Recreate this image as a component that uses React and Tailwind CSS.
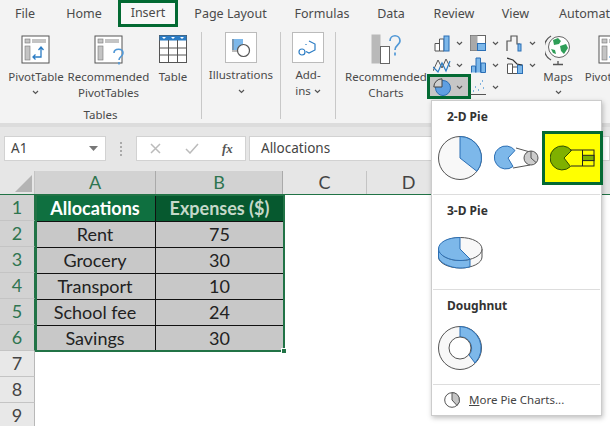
import React from 'react';

const UI = 'font-["Noto_Sans","Open_Sans",sans-serif]';
const BLUE = '#7db8ea';
const BLUE_D = '#2b6fb5';

const tabs = [
  { label: 'File', w: 'w-[50px] justify-center' },
  { label: 'Home', w: 'w-[68px] justify-center' },
  { label: 'Insert', w: 'w-[60px] justify-center', active: true },
  { label: 'Page Layout', w: 'w-[105px] justify-center' },
  { label: 'Formulas', w: 'w-[78px] justify-center' },
  { label: 'Data', w: 'w-[60px] justify-center' },
  { label: 'Review', w: 'w-[66px] justify-center' },
  { label: 'View', w: 'w-[57px] justify-center' },
  { label: 'Automate', w: 'w-[66px] pl-[15px]' },
];

const Chev = ({ className = '' }) => (
  <svg width="7" height="5" viewBox="0 0 7 5" className={className}>
    <path d="M1 1l2.500 2.500L6 1" fill="none" stroke="#555" strokeWidth="1.200" />
  </svg>
);

const PivotIcon = ({ question }) => (
  <svg width="30" height="30" viewBox="0 0 30 30">
    <rect x="1" y="1" width="27" height="27" fill="#fff" stroke="#555" />
    <rect x="4" y="4" width="5" height="4" fill="#c4c4c4" stroke="#777" strokeWidth=".6" />
    <rect x="11" y="4" width="14" height="4" fill="#c4c4c4" />
    <rect x="4" y="11" width="5" height="14" fill="#c4c4c4" stroke="#777" strokeWidth=".6" />
    {question ? (
      <path d="M20 18c0-5 9-5 9 0 0 3.500-4 3.500-4 7M25 27v2.500" fill="none" stroke="#4f97d6" strokeWidth="1.600" />
    ) : (
      <path d="M12 22h8v-9M17.500 15l2.500-3 2.500 3M14.500 19.500L12 22l2.500 2.500" fill="none" stroke="#2b7cc4" strokeWidth="1.300" />
    )}
  </svg>
);

const TableIcon = () => (
  <svg width="29" height="29" viewBox="0 0 29 29">
    <rect x=".5" y=".5" width="27" height="27" fill="#fff" stroke="#555" />
    <rect x=".5" y=".5" width="27" height="5" fill="#2b7cc4" />
    <path d="M3 2h4l-2 2zM12 2h4l-2 2zM21 2h4l-2 2z" fill="#fff" />
    <path d="M.5 13h27M.5 20h27M9.500 5v22M18.500 5v22" stroke="#555" fill="none" />
  </svg>
);

const BoxIcon = ({ children }) => (
  <div className="w-[32px] h-[31px] bg-white border border-[#bbb] flex items-center justify-center">
    <svg width="20" height="20" viewBox="0 0 20 20">{children}</svg>
  </div>
);

const RecCharts = () => (
  <svg width="31" height="31" viewBox="0 0 31 31">
    <rect x=".5" y=".5" width="9" height="29" fill="#b9b9b9" />
    <rect x="9.500" y="12.500" width="9" height="17" fill="#fff" stroke="#666" />
    <path d="M19 7c0-7 10-7 10 0 0 4-5 4-5 9M24 18.500v3" fill="none" stroke="#4f97d6" strokeWidth="1.700" />
  </svg>
);

const ColumnChart = () => (
  <svg width="17" height="17" viewBox="0 0 17 17">
    <path d="M1 8.500h4.500V16H1zM5.500 4h4.500v12H5.500z" fill="#fff" stroke="#555" />
    <rect x="10" y="1" width="5" height="15" fill={BLUE} stroke={BLUE_D} />
  </svg>
);
const HierarchyChart = () => (
  <svg width="16" height="16" viewBox="0 0 16 16">
    <rect x=".5" y=".5" width="15" height="15" fill="#fff" stroke="#666" />
    <rect x=".5" y=".5" width="7" height="15" fill="#a9a9a9" />
    <rect x="7.500" y="8.500" width="8" height="7" fill={BLUE} stroke={BLUE_D} />
  </svg>
);
const WaterfallChart = () => (
  <svg width="17" height="17" viewBox="0 0 17 17">
    <path d="M1 16V6h4V1h6v8h3" fill="none" stroke="#555" strokeWidth="1.200" />
    <rect x="12" y="9" width="3" height="7" fill={BLUE} stroke={BLUE_D} />
  </svg>
);
const LineChart = () => (
  <svg width="18" height="16" viewBox="0 0 18 16">
    <path d="M0 14L5 3l4 8 4-9 4 8" fill="none" stroke="#555" />
    <path d="M0 10l5 5 4-9 4 8 4-10" fill="none" stroke="#2b7cc4" strokeWidth="1.200" />
  </svg>
);
const BarsChart = () => (
  <svg width="15" height="16" viewBox="0 0 15 16">
    <path d="M.5 15.500V9h4v6.500M5 15.500V1h4.500v14.500M10 15.500V6h4.500v9.500z" fill={BLUE} stroke={BLUE_D} />
  </svg>
);
const ComboChart = () => (
  <svg width="16" height="17" viewBox="0 0 16 17">
    <path d="M.5 7h5v9.500h-5zM5.500 10h5v6.500h-5z" fill="#fff" stroke="#555" />
    <rect x="10.500" y="8" width="5" height="8.500" fill={BLUE} stroke={BLUE_D} />
    <path d="M0 1l6 2 4 4 5 1" fill="none" stroke="#333" strokeWidth="1.200" />
  </svg>
);
const ScatterChart = () => (
  <svg width="16" height="16" viewBox="0 0 16 16">
    <path d="M.5 15.500H16" fill="none" stroke="#555" />
    <path d="M3 12h1M5 8h1M8 11h1M10 5h1M13 9h1M12 2h1" stroke="#5b9fd8" strokeWidth="1.400" strokeDasharray="1 1" />
  </svg>
);
// gray quarter sits on top of the blue disc
const PieButton = () => (
  <svg width="18" height="18" viewBox="0 0 18 18">
    <circle cx="10" cy="10" r="7.500" fill="#5f9fe2" stroke={BLUE_D} />
    <path d="M9 9H.8A8.200 8.200 0 0 1 9 .8z" fill="#cfcfcf" stroke="#444" />
  </svg>
);

const Globe = () => (
  <svg width="26" height="33" viewBox="0 0 26 33">
    <path d="M6 3a14 14 0 0 0 0 24M13 28v3M8 31.500h10" fill="none" stroke="#555" strokeWidth="1.300" />
    <circle cx="14" cy="14" r="10.500" fill="#fff" stroke="#666" />
    <path d="M8 7l5-2 3 3-2 3-5 1zM15 13l6-2 2 4-4 6-3-3zM6 16l4 1 1 4-3-1z" fill="#2f9e58" />
  </svg>
);

const ChartCell = ({ active, children }) => (
  <div className="relative h-[22px] flex items-center gap-[5px] pl-[1px]">
    {active && <div className="absolute left-[-5px] top-[-2px] w-[44px] h-[25px] bg-[#c6c6c6] border-[3px] border-[#036a33]" />}
    <div className="relative w-[18px] flex justify-center">{children}</div>
    <Chev className="relative" />
  </div>
);

const Separator = () => <div className="w-px h-[87px] mt-[5px] bg-[#c8c8c8] shrink-0" />;

const RibbonItem = ({ w, icon, children }) => (
  <div className={`${w} shrink-0 flex flex-col items-center text-center leading-[16px]`}>
    <div className="h-[33px] mt-[6px] flex items-center justify-center">{icon}</div>
    <div className="mt-[3px]">{children}</div>
  </div>
);

const Ribbon = () => (
  <div className="h-[96px] bg-[#f3f3f3] flex text-[11.500px] text-[#4a4a4a] overflow-hidden">
    <div className="w-[201px] shrink-0 flex flex-col">
      <div className="flex h-[81px]">
        <RibbonItem w="w-[72px]" icon={<PivotIcon />}>
          PivotTable
          <div className="flex justify-center mt-[5px]"><Chev /></div>
        </RibbonItem>
        <RibbonItem w="w-[73px]" icon={<PivotIcon question />}>
          Recommended<br />PivotTables
        </RibbonItem>
        <RibbonItem w="w-[56px]" icon={<TableIcon />}>Table</RibbonItem>
      </div>
      <div className="text-center leading-[16px]">Tables</div>
    </div>
    <Separator />
    <div className="w-[78px] shrink-0 flex flex-col items-center leading-[16px]">
      <div className="mt-[5px]">
        <BoxIcon>
          <rect x="1" y="1" width="11" height="11" fill={BLUE} />
          <path d="M1 1h2v11h9v2H1z" fill="#777" opacity=".5" />
          <circle cx="12.500" cy="12.500" r="6" fill="#fff" stroke="#555" strokeWidth="1.200" />
        </BoxIcon>
      </div>
      <div className="mt-[4px]">Illustrations</div>
      <Chev className="mt-[6px]" />
    </div>
    <Separator />
    <div className="w-[54px] shrink-0 flex flex-col items-center leading-[16px]">
      <div className="mt-[5px]">
        <BoxIcon>
          <path d="M11 3l6 3v6l-6 3-3-1.500M8 7V6" fill="none" stroke="#2b7cc4" strokeWidth="1.200" />
          <circle cx="4" cy="14" r="3" fill="none" stroke="#2b7cc4" strokeWidth="1.200" />
        </BoxIcon>
      </div>
      <div className="mt-[4px] text-center">Add-<br /><span className="inline-flex items-center gap-[3px]">ins<Chev /></span></div>
    </div>
    <Separator />
    <RibbonItem w="w-[96px] pl-[4px]" icon={<RecCharts />}>
      Recommended<br />Charts
    </RibbonItem>
    <div className="w-[109px] shrink-0 mt-[5px] grid grid-cols-3 content-start">
      <ChartCell><ColumnChart /></ChartCell>
      <ChartCell><HierarchyChart /></ChartCell>
      <ChartCell><WaterfallChart /></ChartCell>
      <ChartCell><LineChart /></ChartCell>
      <ChartCell><BarsChart /></ChartCell>
      <ChartCell><ComboChart /></ChartCell>
      <ChartCell active><PieButton /></ChartCell>
      <ChartCell><ScatterChart /></ChartCell>
    </div>
    <RibbonItem w="w-[34px]" icon={<Globe />}>
      Maps
      <div className="flex justify-center mt-[5px]"><Chev /></div>
    </RibbonItem>
    <RibbonItem w="w-[76px]" icon={<PivotIcon />}>
      PivotChart
    </RibbonItem>
  </div>
);

const FormulaBar = () => (
  <div className="h-[48px] bg-[#e6e6e6] border-t-[4px] border-[#dcdcdc] pt-[9px] pl-[4px] flex items-start text-[13.500px] text-[#444]">
    <div className="w-[102px] h-[25px] bg-white border border-[#d2d2d2] flex items-center justify-between pl-[6px] pr-[7px] shrink-0">
      A1
      <svg width="9" height="5" viewBox="0 0 9 5"><path d="M0 0h9L4.500 5z" fill="#777" /></svg>
    </div>
    <div className="w-[30px] h-[25px] flex flex-col items-center justify-center gap-[2px] shrink-0">
      <span className="w-[2px] h-[2px] bg-[#aaa]" /><span className="w-[2px] h-[2px] bg-[#aaa]" /><span className="w-[2px] h-[2px] bg-[#aaa]" /><span className="w-[2px] h-[2px] bg-[#aaa]" />
    </div>
    <div className="w-[110px] h-[25px] bg-white border border-[#d2d2d2] flex items-center pl-[13px] shrink-0">
      <svg width="11" height="11" viewBox="0 0 11 11"><path d="M1 1l9 9M10 1l-9 9" stroke="#bbb" strokeWidth="1.500" /></svg>
      <svg width="14" height="11" viewBox="0 0 14 11" className="ml-[24px]"><path d="M1 6l4 4 8-9" fill="none" stroke="#bbb" strokeWidth="1.500" /></svg>
      <span className="ml-[23px] font-['Liberation_Serif',serif] italic font-bold text-[13px] text-[#555]">fx</span>
    </div>
    <div className="ml-[3px] flex-1 h-[25px] bg-white border border-[#d2d2d2] flex items-center pl-[11px]">Allocations</div>
  </div>
);

const rows = [
  ['Rent', '75'],
  ['Grocery', '30'],
  ['Transport', '10'],
  ['School fee', '24'],
  ['Savings', '30'],
];

const RowHead = ({ n, on }) => (
  <div className={`h-[26px] flex items-center justify-center border-b border-[#c4c4c4] border-r ${on ? 'bg-[#d2d2d2] text-[#2f7550] border-r-[#217346]' : 'bg-[#e8e8e8] text-[#444] border-r-[#b8b8b8]'}`}>{n}</div>
);

const Sheet = () => (
  <div className="bg-white flex-1 overflow-hidden font-['Lato',sans-serif] text-[18px]">
    <div className="flex h-[24px] bg-[#e6e6e6] text-[#444] border-b border-[#217346]">
      <div className="w-[35px] shrink-0 relative border-r border-[#c4c4c4]">
        <div className="absolute right-[2px] bottom-[2px] w-0 h-0 border-l-[17px] border-l-transparent border-b-[17px] border-b-[#b4b4b4]" />
      </div>
      <div className="w-[121px] shrink-0 bg-[#d2d2d2] text-[#2f7550] border-r border-[#aaa] flex items-center justify-center">A</div>
      <div className="w-[127px] shrink-0 bg-[#d2d2d2] text-[#2f7550] border-r border-[#aaa] flex items-center justify-center">B</div>
      <div className="w-[84px] shrink-0 border-r border-[#c4c4c4] flex items-center justify-center">C</div>
      <div className="w-[83px] shrink-0 flex items-center justify-center">D</div>
    </div>
    <div className="flex">
      <div className="w-[35px] shrink-0">
        {[1, 2, 3, 4, 5, 6].map((n) => <RowHead key={n} n={n} on />)}
        {[7, 8, 9].map((n) => <RowHead key={n} n={n} />)}
      </div>
      <div className="relative w-[248px] h-[156px] grid grid-cols-[121px_127px] grid-rows-[repeat(6,26px)]">
        <div className="bg-[#0f7040] text-white font-bold flex items-center justify-center border-r border-[#111]">Allocations</div>
        <div className="bg-[#06592f] text-[#c5d8c9] font-bold flex items-center justify-center">Expenses ($)</div>
        {rows.map(([name, value]) => (
          <React.Fragment key={name}>
            <div className="bg-[#c8c8c8] text-[#222] flex items-center justify-center border-t border-r border-[#111]">{name}</div>
            <div className="bg-[#c8c8c8] text-[#222] flex items-center justify-center border-t border-[#111]">{value}</div>
          </React.Fragment>
        ))}
        <div className="absolute left-0 top-[-1px] w-[250px] h-[158px] border-2 border-[#217346] pointer-events-none" />
        <div className="absolute left-[246px] top-[153px] w-[6px] h-[6px] bg-[#217346] border border-white" />
      </div>
    </div>
  </div>
);

const PieIcon = () => (
  <svg width="44" height="44" viewBox="0 0 44 44">
    <circle cx="22" cy="22" r="21.500" fill="#f8f8f8" stroke="#555" />
    <path d="M22 22V.5A21.500 21.500 0 0 1 38.900 35.300z" fill={BLUE} stroke={BLUE_D} />
  </svg>
);
const PieOfPieIcon = () => (
  <svg width="45" height="26" viewBox="0 0 45 26">
    <path d="M22 3l14 4M19 23l17-3" stroke="#555" fill="none" />
    <path d="M21 5.500A11.500 11.500 0 1 0 19 21.500L14 13z" fill={BLUE} stroke={BLUE_D} />
    <circle cx="37" cy="13" r="7" fill="#ccc" stroke="#555" />
    <path d="M37 13V6M37 13l5 4.500" stroke="#555" fill="none" />
  </svg>
);
const BarOfPieIcon = () => (
  <svg width="45" height="26" viewBox="0 0 45 26">
    <path d="M21.500 5.500A12 12 0 1 0 20.500 21.500L14 13z" fill="#7fb000" stroke="#2f4f00" />
    <path d="M20 5h12M21 21h11" stroke="#222" fill="none" />
    <rect x="32.500" y="5" width="11.500" height="16" fill="none" stroke="#222" />
    <rect x="32.500" y="10.300" width="11.500" height="5.300" fill="#7fb000" stroke="#222" />
  </svg>
);
const Pie3DIcon = () => (
  <svg width="45" height="32" viewBox="0 0 45 32">
    <path d="M.5 12v8c0 6 10 11 22 11s21.500-5 21.500-11v-8z" fill="#f8f8f8" stroke="#555" />
    <path d="M.5 12v8c0 5.500 12 11 21.500 11 4 0 7-.3 10-1.300v-8z" fill={BLUE} stroke={BLUE_D} />
    <ellipse cx="22.500" cy="12" rx="21.500" ry="11.500" fill="#f8f8f8" stroke="#555" />
    <path d="M22 12V.5C10 .5.500 5 .5 12c0 6 10 11.500 21.500 11.500 4 0 7-.5 10-1.500z" fill={BLUE} stroke={BLUE_D} />
  </svg>
);
const DoughnutIcon = () => (
  <svg width="44" height="44" viewBox="0 0 44 44">
    <circle cx="22" cy="22" r="21.500" fill="#f8f8f8" stroke="#555" />
    <path d="M22 .5A21.500 21.500 0 0 1 37 37L31 29A11 11 0 0 0 22 11z" fill={BLUE} stroke={BLUE_D} />
    <circle cx="22" cy="22" r="11" fill="#fff" stroke="#555" />
  </svg>
);

const SectionTitle = ({ children }) => (
  <div className="font-bold text-[12px] text-[#333] leading-[16px] pl-[14px]">{children}</div>
);

const PieMenu = () => (
  <div className={`absolute left-[431px] top-[100px] w-[171px] h-[316px] bg-white border border-[#ccc] shadow-[1px_2px_5px_rgba(0,0,0,0.25)] flex flex-col ${UI}`}>
    <div className="h-[94px] border-b border-[#ddd] mx-[1px] pt-[8px]">
      <SectionTitle>2-D Pie</SectionTitle>
      <div className="relative flex items-center pl-[5px] mt-[11px] h-[44px]">
        <PieIcon />
        <div className="ml-[12px]"><PieOfPieIcon /></div>
        <div className="absolute left-[109px] top-[-5px] w-[61px] h-[54px] bg-[#ffff00] border-[3px] border-[#036a33] flex items-center justify-center">
          <BarOfPieIcon />
        </div>
      </div>
    </div>
    <div className="h-[95px] border-b border-[#ddd] mx-[1px] pt-[8px]">
      <SectionTitle>3-D Pie</SectionTitle>
      <div className="pl-[5px] mt-[18px]"><Pie3DIcon /></div>
    </div>
    <div className="h-[95px] border-b border-[#ddd] mx-[1px] pt-[8px]">
      <SectionTitle>Doughnut</SectionTitle>
      <div className="pl-[5px] mt-[12px]"><DoughnutIcon /></div>
    </div>
    <div className="flex-1 flex items-center pl-[12px] text-[11.500px] text-[#444]">
      <svg width="16" height="16" viewBox="0 0 16 16" className="mr-[9px]">
        <circle cx="8" cy="8" r="7.300" fill="#fff" stroke="#555" />
        <path d="M8 8V.7A7.300 7.300 0 0 1 13 13.500z" fill="#c4c4c4" stroke="#555" />
      </svg>
      <span><span className="underline">M</span>ore Pie Charts...</span>
    </div>
  </div>
);

export default function App() {
  return (
    <div className={`relative w-[610px] h-[426px] overflow-hidden flex flex-col bg-white ${UI}`}>
      <div className="h-[27px] bg-[#f3f3f3] flex text-[12.500px] text-[#4a4a4a] shrink-0">
        {tabs.map((t) => (
          <div
            key={t.label}
            className={`${t.w} shrink-0 h-[27px] flex items-center whitespace-nowrap ${t.active ? 'border-[3px] border-[#036a33] bg-[#f8f8f8]' : 'pt-[1px]'}`}
          >
            {t.label}
          </div>
        ))}
      </div>
      <Ribbon />
      <FormulaBar />
      <Sheet />
      <PieMenu />
    </div>
  );
}
